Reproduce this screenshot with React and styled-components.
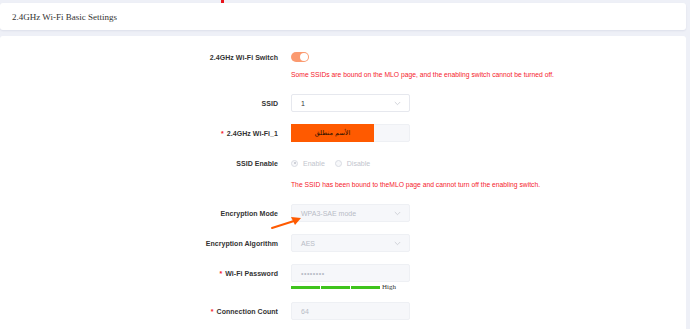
import React from "react";
import styled, { createGlobalStyle } from "styled-components";

const GlobalStyle = createGlobalStyle`
    html, body {
        margin:0;
        padding:0;
        background:#eef0f7;
    }
    body {
        font-family:"Liberation Sans", Arial, sans-serif;
        width:690px;
        height:329px;
        overflow:hidden;
    }
`;

const Page = styled.div`
    position:relative;
    padding:3px 4px 0 0;
    height:326px;
    display:flex;
    flex-direction:column;
    gap:6px;
`;
const TopMark = styled.span`
    position:absolute;
    top:0;
    left:221px;
    width:3px;
    height:3px;
    background:#e8141b;
`;
const HeaderCard = styled.div`
    flex:none;
    height:27px;
    background:#fff;
    border-radius:3px;
    box-shadow:0 1px 2px rgba(30,40,90,0.08);
    display:flex;
    align-items:center;
    padding-left:12px;
    font-family:"Liberation Serif", "Times New Roman", serif;
    font-size:9px;
    color:#333;
`;
const BodyCard = styled.div`
    flex:1;
    position:relative;
    background:#fff;
    border-radius:3px 3px 0 0;
    padding-top:12px;
`;
const FormItem = styled.div`
    display:grid;
    grid-template-columns:278px 1fr;
    column-gap:13px;
    margin-bottom:${props => props.$mb ?? 12}px;
`;
const Label = styled.div`
    height:18px;
    display:flex;
    align-items:center;
    justify-content:flex-end;
    font-size:7px;
    font-weight:700;
    letter-spacing:0.05px;
    color:#333;
`;
const Star = styled.span`
    color:#f5222d;
    margin-right:3px;
`;
const Control = styled.div`
    display:flex;
    flex-direction:column;
`;
const Line = styled.div`
    height:18px;
    display:flex;
    align-items:center;
    gap:10px;
`;
const Hint = styled.div`
    grid-column:2;
    height:16px;
    padding-top:${props => props.$pt || 0}px;
    display:flex;
    align-items:center;
    font-size:6.75px;
    color:#f5222d;
    white-space:nowrap;
`;
const Switch = styled.span`
    position:relative;
    width:18px;
    height:10px;
    border-radius:5px;
    background:#fb9a70;
    &::after {
        content:"";
        position:absolute;
        top:1px;
        right:1px;
        width:8px;
        height:8px;
        border-radius:50%;
        background:#fff;
    }
`;
const Box = styled.div`
    position:relative;
    box-sizing:border-box;
    width:119px;
    height:18px;
    border:1px solid ${props => props.$disabled ? "#eef0f4" : "#e6e8ee"};
    background:${props => props.$disabled ? "#f6f7fa" : "#fff"};
    border-radius:2px;
    display:flex;
    align-items:center;
    padding:0 8px 0 9px;
    font-size:7px;
    color:${props => props.$disabled ? "#b8bcc6" : "#333"};
`;
const BoxText = styled.span`
    flex:1;
    letter-spacing:${props => props.$dots ? "0.5px" : "0"};
`;
const Chevron = () => (
    <svg width="7" height="5" viewBox="0 0 7 5">
        <path d="M0.8 1 L3.5 3.7 L6.2 1" fill="none" stroke="#c6c9d1" strokeWidth="0.8" />
    </svg>
);
const Cover = styled.div`
    position:absolute;
    left:-1px;
    top:-1px;
    bottom:-1px;
    width:83px;
    background:#ff5a00;
    display:flex;
    align-items:center;
    justify-content:center;
    font-family:"DejaVu Sans", "Noto Sans", sans-serif;
    font-size:6.5px;
    color:#2a1000;
`;
const Radio = styled.label`
    display:flex;
    align-items:center;
    gap:5px;
    font-size:7px;
    color:#c2c5cd;
`;
const RadioDot = styled.span`
    position:relative;
    box-sizing:border-box;
    width:7px;
    height:7px;
    border:1px solid #d9dce3;
    border-radius:50%;
    background:#f7f8fa;
    &::after {
        content:"";
        display:${props => props.$checked ? "block" : "none"};
        position:absolute;
        top:1.5px;
        left:1.5px;
        width:2px;
        height:2px;
        border-radius:50%;
        background:#c2c5cd;
    }
`;
const Strength = styled.div`
    display:flex;
    align-items:center;
    gap:1px;
    height:10px;
`;
const Segment = styled.span`
    width:29px;
    height:3px;
    background:#3fc41c;
`;
const Level = styled.span`
    font-family:"Liberation Serif", "Times New Roman", serif;
    font-size:7px;
    color:#333;
    margin-left:1px;
`;
const Arrow = styled.svg`
    position:absolute;
    left:268px;
    top:176px;
`;

const Select = ({ value, disabled }) => (
    <Box $disabled={disabled}>
        <BoxText>{value}</BoxText>
        <Chevron />
    </Box>
);

export default function App() {
    return (
        <>
            <GlobalStyle />
            <Page>
                <TopMark />
                <HeaderCard>2.4GHz Wi-Fi Basic Settings</HeaderCard>
                <BodyCard>
                    <FormItem>
                        <Label>2.4GHz Wi-Fi Switch</Label>
                        <Control>
                            <Line><Switch /></Line>
                        </Control>
                        <Hint>Some SSIDs are bound on the MLO page, and the enabling switch cannot be turned off.</Hint>
                    </FormItem>
                    <FormItem>
                        <Label>SSID</Label>
                        <Control><Select value="1" /></Control>
                    </FormItem>
                    <FormItem>
                        <Label><Star>*</Star>2.4GHz Wi-Fi_1</Label>
                        <Control>
                            <Box $disabled>
                                <Cover dir="rtl">الأسم منطلق</Cover>
                            </Box>
                        </Control>
                    </FormItem>
                    <FormItem>
                        <Label>SSID Enable</Label>
                        <Control>
                            <Line>
                                <Radio><RadioDot $checked />Enable</Radio>
                                <Radio><RadioDot />Disable</Radio>
                            </Line>
                        </Control>
                        <Hint $pt={4}>The SSID has been bound to theMLO page and cannot turn off the enabling switch.</Hint>
                    </FormItem>
                    <FormItem>
                        <Label>Encryption Mode</Label>
                        <Control><Select value="WPA3-SAE mode" disabled /></Control>
                    </FormItem>
                    <FormItem>
                        <Label>Encryption Algorithm</Label>
                        <Control><Select value="AES" disabled /></Control>
                    </FormItem>
                    <FormItem $mb={10}>
                        <Label><Star>*</Star>Wi-Fi Password</Label>
                        <Control>
                            <Box $disabled>
                                <BoxText $dots>••••••••</BoxText>
                            </Box>
                            <Strength>
                                <Segment />
                                <Segment />
                                <Segment />
                                <Level>High</Level>
                            </Strength>
                        </Control>
                    </FormItem>
                    <FormItem>
                        <Label><Star>*</Star>Connection Count</Label>
                        <Control>
                            <Box $disabled><BoxText>64</BoxText></Box>
                        </Control>
                    </FormItem>
                    <Arrow width="40" height="20" viewBox="0 0 40 20">
                        <path d="M4 16 L26 9" stroke="#ff5a00" strokeWidth="2" strokeLinecap="round" />
                        <path d="M33 6 L23 5 L27 13 Z" fill="#ff5a00" />
                    </Arrow>
                </BodyCard>
            </Page>
        </>
    );
}
